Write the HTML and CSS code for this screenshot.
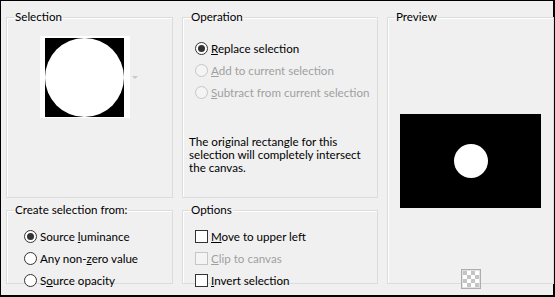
FILE: index.html
```html
<!DOCTYPE html>
<html lang="en">
<head>
  <meta charset="UTF-8" />
  <title>Selection from Mask</title>
  <link rel="stylesheet" href="styles.css">
</head>
<body>
  <div class="dialog">
    <fieldset class="group selection-group">
      <legend>Selection</legend>
      <div class="thumb-row">
        <div class="thumb">
          <svg width="79" height="79" viewBox="0 0 79 79">
            <rect width="79" height="79" fill="#000"/>
            <circle cx="39.5" cy="39.5" r="39.5" fill="#fff"/>
          </svg>
        </div>
        <span class="thumb-arrow"></span>
      </div>
    </fieldset>

    <fieldset class="group operation-group">
      <legend>Operation</legend>
      <div class="option-list">
        <div class="option"><span class="radio checked"></span><span><u>R</u>eplace selection</span></div>
        <div class="option disabled"><span class="radio"></span><span><u>A</u>dd to current selection</span></div>
        <div class="option disabled"><span class="radio"></span><span><u>S</u>ubtract from current selection</span></div>
      </div>
      <p class="note">The original rectangle for this selection will completely intersect the canvas.</p>
    </fieldset>

    <fieldset class="group preview-group">
      <legend>Preview</legend>
      <div class="preview-body">
        <svg class="preview-image" width="141" height="94" viewBox="0 0 141 94">
          <rect width="141" height="94" fill="#000"/>
          <circle cx="71" cy="47" r="17" fill="#fff"/>
        </svg>
        <button class="checker-button" type="button">
          <svg width="16" height="16" viewBox="0 0 16 16">
            <rect width="16" height="16" fill="#fff"/>
            <path d="M0 0h4v4H0zM8 0h4v4H8zM4 4h4v4H4zM12 4h4v4h-4zM0 8h4v4H0zM8 8h4v4H8zM4 12h4v4H4zM12 12h4v4h-4z" fill="#c4c4c4"/>
          </svg>
        </button>
      </div>
    </fieldset>

    <fieldset class="group source-group">
      <legend>Create selection from:</legend>
      <div class="option-list compact">
        <div class="option"><span class="radio checked"></span><span>Source <u>l</u>uminance</span></div>
        <div class="option"><span class="radio"></span><span>Any non-<u>z</u>ero value</span></div>
        <div class="option"><span class="radio"></span><span>S<u>o</u>urce opacity</span></div>
      </div>
    </fieldset>

    <fieldset class="group options-group">
      <legend>Options</legend>
      <div class="option-list compact">
        <div class="option"><span class="check"></span><span><u>M</u>ove to upper left</span></div>
        <div class="option disabled"><span class="check"></span><span><u>C</u>lip to canvas</span></div>
        <div class="option"><span class="check"></span><span><u>I</u>nvert selection</span></div>
      </div>
    </fieldset>
  </div>
</body>
</html>
```

FILE: styles.css
```css
body {
  margin: 0;
  font-family: Lato, 'Noto Sans', sans-serif;
  font-size: 11.6px;
  color: #000;
  background: #fff;
}
.dialog {
  box-sizing: border-box;
  width: 555px;
  height: 297px;
  background: #f0f0f0;
  border-top: 1px solid #000;
  border-left: 1px solid #000;
  border-right: 2px solid #000;
  border-bottom: 2px solid #000;
  display: grid;
  grid-template-columns: 167px 197px 168px;
  grid-template-rows: 189px 82px;
  column-gap: 8px;
  row-gap: 4px;
  padding: 8px 0 0 5px;
}
.group {
  margin: 0;
  padding: 0;
  min-width: 0;
  border: 1px solid #dcdcdc;
  box-shadow: inset 1px 1px 0 #fff;
}
.group legend {
  margin-left: 7px;
  padding: 0 1px;
  line-height: 16px;
}
.operation-group { margin-left: 1px; }
.preview-group { grid-column: 3; grid-row: 1 / 3; margin-left: 1px; }
.options-group { margin-left: 1px; }

.thumb-row {
  display: flex;
  align-items: center;
  margin: 11px 0 0 33px;
}
.thumb {
  width: 90px;
  height: 82px;
  background: #fff;
  display: flex;
  padding: 2px 0 0 5px;
  box-sizing: border-box;
}
.thumb-arrow {
  margin-left: 2px;
  border-left: 3px solid transparent;
  border-right: 3px solid transparent;
  border-top: 3px solid #c8c8c8;
}

.option-list { padding: 12px 0 0 12px; }
.option-list.compact { padding-top: 7px; }
.source-group .option-list { padding-left: 17px; }
.option {
  display: flex;
  align-items: center;
  gap: 3px;
  height: 22px;
  white-space: nowrap;
}
.option.disabled { color: #a0a0a0; }
.radio {
  flex-shrink: 0;
  box-sizing: border-box;
  width: 13px;
  height: 13px;
  border: 1px solid #333;
  border-radius: 50%;
  background: #fff;
  display: flex;
  align-items: center;
  justify-content: center;
}
.radio.checked::after {
  content: "";
  width: 7px;
  height: 7px;
  border-radius: 50%;
  background: #333;
}
.disabled .radio { border-color: #c6c6c6; background: #f4f4f4; }
.check {
  flex-shrink: 0;
  box-sizing: border-box;
  width: 13px;
  height: 13px;
  border: 1px solid #333;
  background: #fff;
}
.disabled .check { border-color: #c6c6c6; background: #f4f4f4; }

.note {
  margin: 32px 0 0 6px;
  line-height: 13px;
  width: 182px;
}

.preview-body {
  display: flex;
  flex-direction: column;
  align-items: center;
  padding-top: 89px;
}
.checker-button {
  margin-top: 61px;
  width: 20px;
  height: 20px;
  padding: 1px;
  border: 1px solid #adadad;
  background: #e1e1e1;
  display: flex;
  align-items: center;
  justify-content: center;
}
```
